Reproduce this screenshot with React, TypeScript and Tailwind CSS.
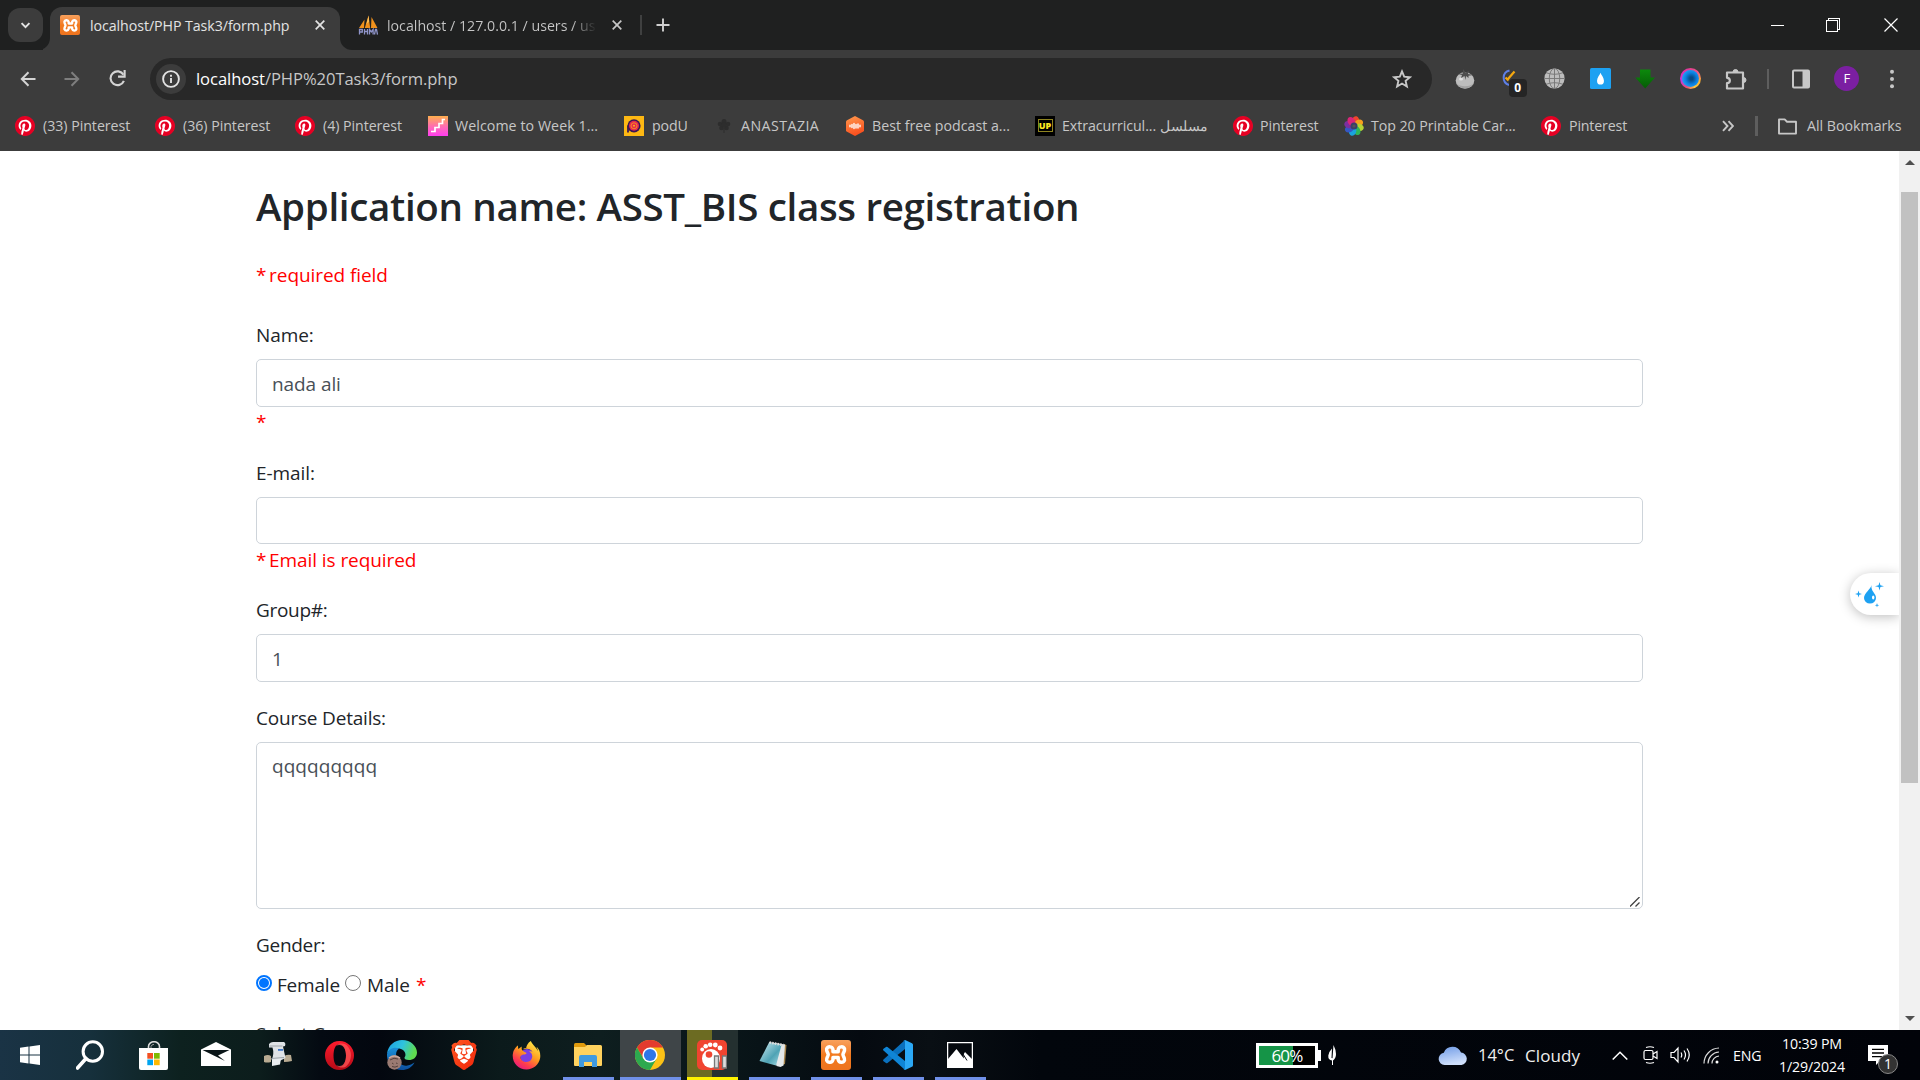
import React from "react";
import { FaFirefoxBrowser } from "react-icons/fa";
import { SiBrave } from "react-icons/si";

const PinIcon = () => (
  <svg viewBox="0 0 24 24" className="h-5 w-5 shrink-0">
    <circle cx="12" cy="12" r="11.2" fill="#fff" />
    <path
      fill="#e60023"
      d="M12 0C5.373 0 0 5.373 0 12c0 5.084 3.163 9.426 7.627 11.174-.105-.949-.2-2.405.042-3.441.218-.937 1.407-5.965 1.407-5.965s-.359-.719-.359-1.782c0-1.668.967-2.914 2.171-2.914 1.023 0 1.518.769 1.518 1.69 0 1.029-.655 2.568-.994 3.995-.283 1.194.599 2.169 1.777 2.169 2.133 0 3.772-2.249 3.772-5.495 0-2.873-2.064-4.882-5.012-4.882-3.414 0-5.418 2.561-5.418 5.207 0 1.031.397 2.138.893 2.738.098.119.112.224.083.345l-.333 1.36c-.053.22-.174.267-.402.161-1.499-.698-2.436-2.889-2.436-4.649 0-3.785 2.75-7.262 7.929-7.262 4.163 0 7.398 2.967 7.398 6.931 0 4.136-2.607 7.464-6.227 7.464-1.216 0-2.359-.631-2.75-1.378l-.748 2.853c-.271 1.043-1.002 2.35-1.492 3.146C9.57 23.812 10.763 24 12 24c6.627 0 12-5.373 12-12S18.627 0 12 0z"
    />
  </svg>
);

const StairsIcon = () => (
  <svg viewBox="0 0 20 20" className="h-5 w-5 shrink-0">
    <defs>
      <linearGradient id="stairs" x1="0" y1="0" x2="0" y2="1">
        <stop offset="0" stopColor="#ffb04d" />
        <stop offset="0.5" stopColor="#ff6fae" />
        <stop offset="1" stopColor="#ff3df0" />
      </linearGradient>
    </defs>
    <rect width="20" height="20" fill="url(#stairs)" />
    <path d="M3 15.500h4v-4h4v-4h3.500v-4h2.500" fill="none" stroke="#fff" strokeWidth="1.700" />
  </svg>
);

const PoduIcon = () => (
  <svg viewBox="0 0 20 20" className="h-5 w-5 shrink-0">
    <rect width="20" height="20" fill="#fdb813" />
    <path d="M4 16.500V9.500" stroke="#3b1653" strokeWidth="1.800" />
    <circle cx="10" cy="9.800" r="6.600" fill="#3b1653" />
    <circle cx="10" cy="9.800" r="5" fill="#e6274e" />
    <circle cx="10" cy="9.800" r="3" fill="none" stroke="#f7941d" strokeWidth="0.900" />
    <circle cx="10" cy="9.800" r="1" fill="#fdb813" />
  </svg>
);

const FlowerIcon = () => (
  <svg viewBox="0 0 20 20" className="h-5 w-5 shrink-0" fill="#2d2d2d">
    <circle cx="10" cy="5.500" r="2.500" />
    <circle cx="6" cy="8" r="2.300" />
    <circle cx="14" cy="8" r="2.300" />
    <circle cx="7.500" cy="12" r="2.300" />
    <circle cx="12.500" cy="12" r="2.300" />
    <circle cx="10" cy="9" r="2.500" />
    <path d="M9.500 12h1v5h-1z" />
  </svg>
);

const PodcastIcon = () => (
  <svg viewBox="0 0 20 20" className="h-5 w-5 shrink-0">
    <defs>
      <linearGradient id="pod" x1="0" y1="0" x2="0.300" y2="1">
        <stop offset="0" stopColor="#ff9a4d" />
        <stop offset="1" stopColor="#f9501f" />
      </linearGradient>
    </defs>
    <path d="M10 0l8 4.200q1 .6 1 1.600v8.400q0 1-1 1.600L10 20l-8-4.200q-1-.6-1-1.600V5.800q0-1 1-1.600z" fill="url(#pod)" />
    <path d="M5 9.300v1.400M7 8.500v3M9 7.500v5M11 8.500v3.500M13 8v4M15 9.300v1.400" stroke="#fff" strokeWidth="1.400" strokeLinecap="round" />
  </svg>
);

const UpIcon = () => (
  <span className="flex h-5 w-5 shrink-0 items-center justify-center bg-black">
    <span className="flex h-[13px] w-[15px] items-center justify-center border border-[#8f8420] text-[9px] leading-none font-extrabold text-[#fce821]">
      UP
    </span>
  </span>
);

const petals = ["#f0452c", "#f7a01d", "#b7d334", "#2fb457", "#1aa3dd", "#3557c4", "#7b2fa0", "#d9267a"];
const RainbowIcon = () => (
  <svg viewBox="0 0 20 20" className="h-5 w-5 shrink-0">
    {petals.map((c, i) => (
      <ellipse key={c} cx="10" cy="4.800" rx="3.600" ry="4.800" fill={c} transform={`rotate(${i * 45 + 15} 10 10)`} />
    ))}
    <circle cx="10" cy="10" r="3.500" fill="#3b3f6a" />
    <circle cx="10" cy="10" r="1.600" fill="#555" />
  </svg>
);

const XamppIcon = ({ className }: { className: string }) => (
  <span className={className + " flex shrink-0 items-center justify-center bg-gradient-to-b from-[#f8a15c] via-[#f27a1e] to-[#ee7420]"}>
    <svg viewBox="0 0 24 24" className="h-[84%] w-[84%]" fill="none" stroke="#fff" strokeWidth="3.300" strokeLinejoin="round">
      <path d="M9.500 9.300V7A3.200 3.200 0 0 0 3.500 6.500C3 9 4.800 10 5 12C4.800 14 3 15 3.500 17.500A3.200 3.200 0 0 0 9.500 17V14.700H14.500V17A3.200 3.200 0 0 0 20.500 17.500C21 15 19.200 14 19 12C19.200 10 21 9 20.500 6.500A3.200 3.200 0 0 0 14.500 7V9.300Z" />
    </svg>
  </span>
);

const PmaIcon = () => (
  <svg viewBox="0 0 20 20" className="h-5 w-5 shrink-0">
    <path d="M1 13L6.500 4.500 6 13zM6.800 13L10.500.5l1.700 12.500zM13 13l.5-11 6 11z" fill="#f0911c" />
    <path d="M8.500 9L10.500.5l.6 6z" fill="#ffc35c" />
    <path d="M1.500 19.500v-5h2.800v2.500H1.700M6.500 14v5.500M9.500 14v5.500M6.500 16.500h3M11.500 19.500v-5l1.800 2.500 1.800-2.500v5M16.500 19.500l1-5h1l1 5" fill="none" stroke="#8f94c9" strokeWidth="1.300" />
  </svg>
);

type Mark = { icon: React.ReactNode; label: string; box: string; text: string };
const bookmarks: Mark[] = [
  { icon: <PinIcon />, label: "(33) Pinterest", box: "w-[140px]", text: "tracking-[-0.03px]" },
  { icon: <PinIcon />, label: "(36) Pinterest", box: "w-[140px]", text: "tracking-[-0.03px]" },
  { icon: <PinIcon />, label: "(4) Pinterest", box: "w-[133px]", text: "tracking-[-0.05px]" },
  { icon: <StairsIcon />, label: "Welcome to Week 1...", box: "w-[196px]", text: "ml-[-1px] tracking-[0.08px]" },
  { icon: <PoduIcon />, label: "podU", box: "w-[90px]", text: "tracking-[-0.1px]" },
  { icon: <FlowerIcon />, label: "ANASTAZIA", box: "w-[131px]", text: "ml-[-1px] tracking-[0.45px]" },
  { icon: <PodcastIcon />, label: "Best free podcast a...", box: "w-[190px]", text: "ml-[-1px] tracking-[0px]" },
  { icon: <UpIcon />, label: "Extracurricul... مسلسل", box: "w-[198px]", text: "ml-[-1px] tracking-[-0.05px]" },
  { icon: <PinIcon />, label: "Pinterest", box: "w-[111px]", text: "ml-[-1px] tracking-[-0.1px]" },
  { icon: <RainbowIcon />, label: "Top 20 Printable Car...", box: "w-[197px]", text: "ml-[-1px] tracking-[-0.05px]" },
  { icon: <PinIcon />, label: "Pinterest", box: "w-[111px]", text: "tracking-[-0.15px]" },
];

const CloseX = ({ color }: { color: string }) => (
  <svg viewBox="0 0 10 10" className="h-[10px] w-[10px] shrink-0" stroke={color} strokeWidth="1.700" fill="none">
    <path d="M.7.7l8.600 8.600M9.300.7L.7 9.300" />
  </svg>
);

const TabStrip = () => (
  <div className="flex h-[50px] bg-[#1f2020]">
    <div className="mt-2 ml-2 flex h-[34px] w-[35px] items-center justify-center rounded-[12px] bg-[#3c3c3c]">
      <svg viewBox="0 0 12 8" className="h-[7px] w-[11px]" fill="none" stroke="#e3e3e3" strokeWidth="2.200">
        <path d="M1.500 1.200L6 5.800l4.500-4.600" />
      </svg>
    </div>
    <div className="flex items-end">
      <div className="flex h-3 w-[7px] justify-end overflow-hidden">
        <div className="h-3 w-3 shrink-0 rounded-br-[12px] shadow-[6px_6px_0_6px_#3c3c3c]" />
      </div>
    </div>
    <div className="mt-[7px] flex h-[43px] w-[290px] items-center rounded-t-[12px] bg-[#3c3c3c] pb-[7px] pl-[10px]">
      <XamppIcon className="h-5 w-5 rounded-[2px]" />
      <span className="mt-px ml-[10px] w-[225px] text-[14.200px] tracking-[-0.06px] whitespace-nowrap text-[#e3e3e3]">localhost/PHP Task3/form.php</span>
      <CloseX color="#e3e3e3" />
    </div>
    <div className="flex w-[18px] items-end overflow-hidden">
      <div className="h-3 w-3 rounded-bl-[12px] shadow-[-6px_6px_0_6px_#3c3c3c]" />
    </div>
    <div className="flex items-center">
      <PmaIcon />
      <span className="mt-px ml-[9px] w-[210px] overflow-hidden bg-gradient-to-r from-[#c7c7c7] from-88% to-[#1f2020] bg-clip-text text-[14.200px] tracking-[0px] whitespace-nowrap text-transparent">
        localhost / 127.0.0.1 / users / us
      </span>
      <span className="ml-[15px] flex">
        <CloseX color="#c7c7c7" />
      </span>
      <span className="ml-[18px] h-5 w-[2px] bg-[#3f4040]" />
      <svg viewBox="0 0 14 14" className="ml-[14px] h-[14px] w-[14px]" stroke="#d0d0d0" strokeWidth="1.900">
        <path d="M7 .5v13M.5 7h13" />
      </svg>
    </div>
    <div className="mr-[22px] ml-auto flex items-center">
      <span className="mr-[42px] h-px w-[13px] bg-white" />
      <svg viewBox="0 0 14 14" className="mr-[44px] h-[14px] w-[14px]" fill="none" stroke="#fff" strokeWidth="1" shapeRendering="crispEdges">
        <path d="M.5 2.500h11v11H.500zM2.500 2.500v-2h11v11h-2" />
      </svg>
      <svg viewBox="0 0 14 14" className="h-[14px] w-[14px]" stroke="#fff" strokeWidth="1.200">
        <path d="M.5.500l13 13M13.500.500l-13 13" />
      </svg>
    </div>
  </div>
);

const Ext = ({ children }: { children: React.ReactNode }) => <span className="flex w-[45.200px] justify-center">{children}</span>;

const Extensions = () => (
  <div className="flex items-center">
    <Ext>
      <svg viewBox="0 0 20 21" className="h-[21px] w-[20px]">
        <ellipse cx="10" cy="12.500" rx="9.300" ry="8.200" fill="#bdbdbd" />
        <path d="M1.500 15a9 8 0 0017 0 9.500 6 0 01-17 0" fill="#a3a3a3" />
        <ellipse cx="6" cy="11" rx="2" ry="1.500" fill="#e0e0e0" />
        <path d="M9.500 8L6 10l1-3-4-1 5-.5L8 1l2.500 3.500L14 3l-1 3 5 1-4.500.7L13.500 10 11 8l-.5 4z" fill="#4e4e4e" />
      </svg>
    </Ext>
    <Ext>
      <span className="relative flex h-[22px] w-[20px]">
        <svg viewBox="0 0 20 20" className="h-5 w-5" fill="none">
          <path d="M9.500 2.500A7.500 7.500 0 009 17" stroke="#5e7fe6" strokeWidth="2" />
          <path d="M14.500 3.500L8 11M5.500 9.500l3 3" stroke="#f5a80f" strokeWidth="2.200" />
        </svg>
        <span className="absolute top-[11px] left-[9px] flex h-[18px] w-[18px] items-center justify-center rounded-[4px] bg-[#252525] text-[12px] leading-none font-bold text-white">0</span>
      </span>
    </Ext>
    <Ext>
      <svg viewBox="0 0 20 20" className="h-[21px] w-[21px]" fill="none">
        <circle cx="10" cy="10" r="9.600" fill="#bdbdbd" />
        <path d="M10 0v20M0.500 10h19M2 4.500q8 3 16 0M2 15.500q8-3 16 0" stroke="#777" strokeWidth="0.900" />
        <ellipse cx="10" cy="10" rx="5" ry="9.600" stroke="#777" strokeWidth="0.900" />
      </svg>
    </Ext>
    <Ext>
      <svg viewBox="0 0 20 20" className="h-[21px] w-[21px]">
        <rect width="20" height="20" rx="1.500" fill="#1da1f2" />
        <path d="M10 4.500c.6 2 3.300 4.500 3.300 7.600a3.300 3.700 0 01-6.600 0C6.700 9 9.400 6.500 10 4.500z" fill="#fff" />
      </svg>
    </Ext>
    <Ext>
      <svg viewBox="0 0 20 20" className="h-[20px] w-[20px]">
        <defs>
          <linearGradient id="dl" x1="0" y1="0" x2="0" y2="1">
            <stop offset="0" stopColor="#0c8a0c" />
            <stop offset="1" stopColor="#065c06" />
          </linearGradient>
        </defs>
        <path d="M5 .5h10.500v8H20L10.200 19.500.300 8.500H5z" fill="url(#dl)" />
      </svg>
    </Ext>
    <Ext>
      <span className="flex h-[21px] w-[21px] items-center justify-center rounded-full bg-[conic-gradient(#e2408f,#f0578a,#ffb02e,#ffc83c,#e84b7a,#c13be0,#e02fb0,#e2408f)]">
        <span className="h-[17px] w-[17px] rounded-full bg-[radial-gradient(circle_at_55%_50%,#084a86_12%,#0a7fe0_45%,#35b0ff_90%)]" />
      </span>
    </Ext>
    <Ext>
      <svg viewBox="0 0 22 22" className="h-[22px] w-[22px]" fill="none" stroke="#c7c7c7" strokeWidth="2.200" strokeLinejoin="round">
        <path d="M2 4.500h16v16H2v-5.300c3.800 0 3.800-5.400 0-5.400z" />
        <path d="M8 4a2.500 2.500 0 015 0zM18.500 9.500a2.500 2.500 0 010 5z" fill="#c7c7c7" strokeWidth="1" />
      </svg>
    </Ext>
  </div>
);

const Toolbar = () => (
  <div className="flex h-[53px] items-center bg-[#3c3c3c] pt-1">
    <div className="flex w-[150px] items-center pl-[20px]">
      <svg viewBox="0 0 16 16" className="h-4 w-4" fill="none" stroke="#d4d4d4" strokeWidth="2">
        <path d="M15.500 8H2M8.500 1.300L1.800 8l6.700 6.700" />
      </svg>
      <svg viewBox="0 0 16 16" className="ml-[28px] h-4 w-4" fill="none" stroke="#7e7e7e" strokeWidth="2">
        <path d="M.5 8H14M7.500 1.300L14.200 8l-6.700 6.700" />
      </svg>
      <svg viewBox="0 0 16 16" className="ml-[29px] h-[17px] w-[17px]" fill="none" stroke="#d4d4d4" strokeWidth="2">
        <path d="M14 10.200A6.500 6.500 0 1113.600 4.500" />
        <path d="M14.700 0v6.200H8.500" />
      </svg>
    </div>
    <div className="flex h-[42px] w-[1282px] items-center rounded-full bg-[#282828] pl-[6px]">
      <span className="flex h-[30px] w-[30px] items-center justify-center rounded-full bg-[#3c3c3c]">
        <svg viewBox="0 0 18 18" className="h-[18px] w-[18px]" fill="none" stroke="#e3e3e3" strokeWidth="1.900">
          <circle cx="9" cy="9" r="7.900" />
          <path d="M9 8v5M9 4.800v2" />
        </svg>
      </span>
      <span className="mt-[2px] ml-[10px] text-[16.600px] tracking-[-0.07px] text-[#c7c7c7]">
        <span className="text-white">localhost</span>/PHP%20Task3/form.php
      </span>
      <svg viewBox="0 0 20 20" className="mr-[20px] ml-auto h-[20px] w-[20px]" fill="none" stroke="#c7c7c7" strokeWidth="1.900">
        <path d="M10 2.400l2.200 5.300 5.700.5-4.300 3.700 1.300 5.600-4.900-3-4.900 3 1.300-5.600-4.300-3.700 5.700-.5z" />
      </svg>
    </div>
    <div className="ml-[10px] flex items-center">
      <Extensions />
      <span className="ml-[9px] h-5 w-[2px] bg-[#5e5e5e]" />
      <svg viewBox="0 0 18 20" className="ml-[23px] h-[20px] w-[18px]">
        <rect x="1" y="1.500" width="16" height="17" rx="1" fill="none" stroke="#c7c7c7" strokeWidth="2" />
        <path d="M10.500 1.500H17v17h-6.500z" fill="#c7c7c7" />
      </svg>
      <span className="ml-[24px] flex h-[25px] w-[25px] items-center justify-center rounded-full bg-[#7b1fa2] text-[13px] text-white">F</span>
      <svg viewBox="0 0 4 20" className="ml-[31px] h-5 w-1" fill="#c7c7c7">
        <circle cx="2" cy="2.800" r="2" />
        <circle cx="2" cy="10" r="2" />
        <circle cx="2" cy="17.200" r="2" />
      </svg>
    </div>
  </div>
);

const BookmarkBar = () => (
  <div className="flex h-[48px] items-center bg-[#3c3c3c] pb-[2px] pl-[15px] text-[14.200px] whitespace-nowrap text-[#c7c7c7]">
    {bookmarks.map((b, i) => (
      <div key={i} className={b.box + " flex shrink-0 items-center gap-[8px]"}>
        {b.icon}
        <span className={b.text}>{b.label}</span>
      </div>
    ))}
    <svg viewBox="0 0 12 12" className="ml-[70px] h-3 w-3 shrink-0" fill="none" stroke="#c7c7c7" strokeWidth="1.900">
      <path d="M1 1.200L5.500 6 1 10.800M6.500 1.200L11 6l-4.500 4.800" />
    </svg>
    <span className="ml-[21px] h-5 w-[3px] shrink-0 bg-[#5e5e5e]" />
    <svg viewBox="0 0 21 18" className="ml-[19px] h-[17px] w-[21px] shrink-0" fill="none" stroke="#c7c7c7" strokeWidth="2">
      <path d="M1.500 1.500h6l2.500 2.500h9.500v12.500h-18z" strokeLinejoin="round" />
    </svg>
    <span className="ml-[9px]">All Bookmarks</span>
  </div>
);

const field = "block w-full rounded-[5px] border border-[#ced4da] pl-[15px] text-[#495057]";

const Star = () => <span className="tracking-[-2.200px] text-[#ff0000]">*</span>;

const FormPage = () => (
  <main className="flex h-[879px] overflow-hidden bg-white">
    <div className="relative flex-1 overflow-hidden pt-[31px] pl-[256px] text-[19px] leading-[30px] tracking-[-0.08px] text-[#212529]">
      <div className="w-[1387px]">
        <h2 className="text-[38.500px] leading-[48px] font-semibold tracking-[-0.330px] whitespace-nowrap">Application name: ASST_BIS class registration</h2>
        <p className="mt-[30px] text-[#ff0000]">
          <Star /> required field
        </p>
        <div className="mt-[30px]">Name:</div>
        <div className={field + " mt-[9px] flex h-[48px] items-center pt-[2px]"}>nada ali</div>
        <div>
          <Star />
        </div>
        <div className="mt-[21px]">E-mail:</div>
        <div className={field + " mt-[9px] h-[47px]"} />
        <div className="mt-px text-[#ff0000]">
          <Star /> Email is required
        </div>
        <div className="mt-[20px] tracking-[-0.300px]">Group#:</div>
        <div className={field + " mt-[9px] flex h-[48px] items-center pt-[2px]"}>1</div>
        <div className="mt-[21px] tracking-[-0.200px]">Course Details:</div>
        <div className={field + " relative mt-[9px] h-[167px] pt-[8px] tracking-[0.060px]"}>
          qqqqqqqqq
          <svg viewBox="0 0 10 10" className="absolute right-[2px] bottom-[1px] h-[10px] w-[10px]" stroke="#444" strokeWidth="1.300">
            <path d="M0 9.500L9.500 0M5.500 9.500l4-4" />
          </svg>
        </div>
        <div className="mt-[21px] tracking-[-0.300px]">Gender:</div>
        <div className="mt-[10px] flex whitespace-pre">
          <span className="mt-[5px] flex h-[16px] w-[16px] items-center justify-center rounded-full border-2 border-[#0075ff]">
            <span className="h-[10px] w-[10px] rounded-full bg-[#0075ff]" />
          </span>
          <span className="ml-[5px] w-[68px] tracking-[-0.200px]">Female</span>
          <span className="mt-[5px] h-[16px] w-[16px] rounded-full border border-[#767676]" />
          <span className="ml-[6px] w-[49px]">Male</span>
          <Star />
        </div>
        <div className="mt-[19px]">Select Courses:</div>
      </div>
      <div className="absolute top-[422px] right-0 h-[42px] w-[49px] rounded-l-full bg-white shadow-[0_2px_12px_rgba(0,0,0,0.25)]">
        <svg viewBox="0 0 30 28" className="mt-[8px] ml-[5px] h-[28px] w-[30px]" fill="#1da1f2">
          <path d="M16.500 4c-.5 4-7.500 8-7.500 13a6 5.500 0 0012 0C21 12 15.500 10.500 16.500 4z" />
          <ellipse cx="18.200" cy="16.500" rx="1.200" ry="2" fill="#fff" />
          <path d="M24.500 1l.9 3.300 3.600.9-3.600.9-.9 3.400-.9-3.400-3.600-.9 3.600-.9zM3.500 9.500l.8 2.700 2.700.8-2.700.8-.8 2.700-.8-2.700L0 13l2.700-.8zM22 22l.5 1.700 1.700.5-1.700.5-.5 1.700-.5-1.700-1.700-.5 1.700-.5z" />
        </svg>
      </div>
    </div>
    <div className="flex w-[21px] flex-col items-center bg-[#f1f1f1]">
      <svg viewBox="0 0 10 5" className="mt-[9px] h-[5px] w-[10px]" fill="#505050">
        <path d="M0 5l5-5 5 5z" />
      </svg>
      <div className="mt-[27px] h-[591px] w-[17px] bg-[#c1c1c1]" />
      <svg viewBox="0 0 10 5" className="mt-auto mb-[9px] h-[5px] w-[10px]" fill="#505050">
        <path d="M0 0l5 5 5-5z" />
      </svg>
    </div>
  </main>
);

const WindowsIcon = () => (
  <svg viewBox="0 0 20 20" className="h-5 w-5" fill="#fff">
    <path d="M0 2.800l8.500-1.200v8H0zM9.500 1.500L20 0v9.600H9.500zM0 10.500h8.500v8L0 17.300zM9.500 10.500H20V20L9.500 18.600z" />
  </svg>
);
const SearchGlass = () => (
  <svg viewBox="0 0 28 30" className="h-[30px] w-[28px]" fill="none" stroke="#fff" strokeWidth="3">
    <circle cx="16.800" cy="11.500" r="9.700" />
    <path d="M10 18.500L1.500 28" strokeWidth="3.600" strokeLinecap="round" />
  </svg>
);
const StoreIcon = () => (
  <svg viewBox="0 0 29 29" className="mr-px h-[29px] w-[29px]">
    <path d="M9.500 8V5.500a5.500 4.800 0 0111 0V8" fill="none" stroke="#ddd" strokeWidth="1.600" />
    <path d="M12 8V5.500q.5-2 3-2.200" fill="none" stroke="#999" strokeWidth="1" />
    <path d="M0 7h29v20a2 2 0 01-2 2H2a2 2 0 01-2-2z" fill="#fff" />
    <path d="M8.300 12h5.700v5.700H8.300z" fill="#f25022" />
    <path d="M15 12h5.700v5.700H15z" fill="#7fba00" />
    <path d="M8.300 18.500h5.700v5.700H8.300z" fill="#00a4ef" />
    <path d="M15 18.500h5.700v5.700H15z" fill="#ffb900" />
  </svg>
);
const MailIcon = () => (
  <svg viewBox="0 0 30 24" className="mt-[-2px] h-6 w-[30px]">
    <path d="M0 7.500L15 0l15 7.500V24H0z" fill="#fff" />
    <path d="M1.500 8h27L17 13.500l7 5.500L1.500 8z" fill="#0a1518" />
  </svg>
);
const ScrollIcon = () => (
  <svg viewBox="0 0 28 26" className="mt-[-2px] h-[26px] w-[28px]">
    <path d="M0 15q4-2 7 0v6q-4 1-7 0zM20 15q4-2 7-1l1 6q-4 1-8 1z" fill="#b9ab92" />
    <path d="M5 3q2-2.500 5-2h10q2 1 1 4l-2 .5 2.500 11.500-6 3-8-1q3-6 1-12.500H5z" fill="#dfe3e6" />
    <path d="M14 8h5v1.800h-5z" fill="#3f78c9" />
    <path d="M8 19l9-1.500-1 6-8 1.500z" fill="#e9edf0" />
    <path d="M7 17.500l13-1M5.500 5h13" stroke="#8d959b" strokeWidth="0.800" />
  </svg>
);
const OperaIcon = () => (
  <svg viewBox="0 0 29 29" className="mr-px h-[29px] w-[29px]">
    <defs>
      <linearGradient id="op" x1="0" y1="0" x2="0" y2="1">
        <stop offset="0" stopColor="#ff1b2d" />
        <stop offset="1" stopColor="#b50b17" />
      </linearGradient>
    </defs>
    <path fillRule="evenodd" d="M14.500 0a14.500 14.500 0 100 29 14.500 14.500 0 000-29zm0 3.200c4 0 6.500 5 6.500 11.300s-2.500 11.300-6.500 11.300S8.500 21 8.500 14.500s2-11.300 6-11.300z" fill="url(#op)" />
    <path d="M11 5c4-4 9-2 10.500-1a14.500 14.500 0 010 21c-2 2-7 2.500-10.500-1 6 3.500 10-2 10-9.500S17 2 11 5z" fill="#ff5a5a" opacity=".7" />
  </svg>
);
const EdgeIcon = () => (
  <svg viewBox="0 0 30 30" className="h-[30px] w-[30px]">
    <defs>
      <linearGradient id="e1" x1="0" y1="0" x2="1" y2="0.300">
        <stop offset="0" stopColor="#1b9de2" />
        <stop offset="0.550" stopColor="#2fc3df" />
        <stop offset="1" stopColor="#5fdb4f" />
      </linearGradient>
      <linearGradient id="e2" x1="0" y1="0" x2="0" y2="1">
        <stop offset="0" stopColor="#1a8fd8" />
        <stop offset="1" stopColor="#0c4f9e" />
      </linearGradient>
    </defs>
    <path d="M0 14C1 5 8 0 15 0c9 0 15 6.500 15 12.500 0 5-4 7.500-8 7.500-3.500 0-5-1.500-4.500-2.500 1.500-1.500 1.500-5-1.500-7.500C11 6.500 3 8 0 14z" fill="url(#e1)" />
    <path d="M0 14c2-6 8-7.500 12.500-5.500C9 10 8.500 14 9.500 18c1.200 5 6 8.500 11 7.500 3-.6 5.500-2 7-3C25 27.500 20 30 15 30 6 30-.5 23 0 14z" fill="url(#e2)" />
    <circle cx="7.500" cy="22.500" r="7.200" fill="#9a7a72" />
    <path d="M3 20q4-3 8-1M5 23l1.500 1M9 23l1.500.5M5 26.500q3 1.500 6-.5" stroke="#54403c" strokeWidth="1" fill="none" />
    <path d="M2 18q5-4 11 0" stroke="#c9aaa0" strokeWidth="1.500" fill="none" />
  </svg>
);
const Gradients = () => (
  <svg className="absolute h-0 w-0">
    <defs>
      <linearGradient id="brave" x1="0" y1="0" x2="1" y2="1">
        <stop offset="0" stopColor="#ff5722" />
        <stop offset="1" stopColor="#f0260b" />
      </linearGradient>
      <linearGradient id="ffx" x1="0.800" y1="0" x2="0.200" y2="1">
        <stop offset="0" stopColor="#fff04a" />
        <stop offset="0.450" stopColor="#ff9a1f" />
        <stop offset="0.750" stopColor="#ff3b4e" />
        <stop offset="1" stopColor="#e31587" />
      </linearGradient>
    </defs>
  </svg>
);
const BraveIcon = () => (
  <span className="relative flex h-[30px] w-[30px] items-center justify-center">
    <svg viewBox="0 0 24 26" className="absolute h-[24px] w-[18px]">
      <path d="M0 0h24v18l-12 8-12-8z" fill="#fff" />
    </svg>
    <SiBrave className="relative h-[30px] w-[30px]" fill="url(#brave)" />
  </span>
);
const FirefoxIcon = () => (
  <span className="relative flex h-[29px] w-[29px] items-center justify-center">
    <span className="absolute top-[8px] left-[8px] h-[14px] w-[14px] rounded-full bg-[#7a3fe4]" />
    <FaFirefoxBrowser className="relative h-[29px] w-[29px]" fill="url(#ffx)" />
  </span>
);
const ExplorerIcon = () => (
  <svg viewBox="0 0 28 24" className="mt-[-1px] h-6 w-7">
    <path d="M0 1.500Q0 0 1.500 0H10l3 3v3H0z" fill="#e09a0c" />
    <path d="M0 4h11l2-2h13.500q1.500 0 1.500 1.500V22q0 1-1 1H1q-1 0-1-1z" fill="#ffd25e" />
    <path d="M5 24V14q0-2 2-2h14q2 0 2 2v10h-5v-5h-8v5z" fill="#3f9ae0" />
  </svg>
);
const ChromeIcon = () => (
  <svg viewBox="0 0 30 30" className="mr-px h-[30px] w-[30px]">
    <circle cx="15" cy="15" r="15" fill="#fbc116" />
    <path d="M2 7.500A15 15 0 0128 7.500H15L8.500 18.750z" fill="#e33b2e" />
    <path d="M2 7.500A15 15 0 0015 30l6.500-11.250L8.500 18.750z" fill="#2da94f" />
    <circle cx="15" cy="15" r="7.600" fill="#fff" />
    <circle cx="15" cy="15" r="6.100" fill="#2f76e8" />
  </svg>
);
const GomIcon = () => (
  <svg viewBox="0 0 30 30" className="mr-px h-[30px] w-[30px]">
    <rect width="30" height="30" rx="5" fill="#f04430" />
    <g fill="#fff">
      <ellipse cx="14" cy="18.500" rx="9" ry="9.500" />
      <circle cx="5.200" cy="9.500" r="1.900" />
      <circle cx="8.700" cy="6.300" r="2.300" />
      <circle cx="13.200" cy="4.700" r="2.300" />
      <circle cx="18.300" cy="5" r="2.400" />
      <circle cx="23" cy="8" r="2.400" />
    </g>
    <circle cx="12" cy="14.500" r="3.300" fill="#f04430" />
    <path d="M17.500 16h4v12h-4zM25.500 16h4v12h-4z" fill="#ddd" stroke="#777" strokeWidth="1.300" />
  </svg>
);
const NotepadIcon = () => (
  <svg viewBox="0 0 28 28" className="mt-[-2px] mr-[3px] h-7 w-7">
    <defs>
      <linearGradient id="np" x1="0" y1="0" x2="1" y2="1">
        <stop offset="0" stopColor="#cfeaf0" />
        <stop offset="0.600" stopColor="#4fa3b5" />
        <stop offset="1" stopColor="#a8dbe4" />
      </linearGradient>
    </defs>
    <path d="M25 4l2.500 1L26 24l-3 1z" fill="#a5834b" />
    <path d="M10 2l16 2.500-1.500 21-3 1.500-4-1z" fill="#e4e8ea" />
    <path d="M10 2.500L22.500 5 17 25.500.500 21z" fill="url(#np)" />
    <path d="M10.500 2.500l14 2.500" stroke="#ddd" strokeWidth="2.500" strokeDasharray="1.500 1.200" />
  </svg>
);
const CodeIcon = () => (
  <svg viewBox="0 0 30 30" className="h-[30px] w-[30px]">
    <path d="M22 0v9L4.500 23q-.8.500-1.500 0L.500 21.200q-.9-.9 0-1.700z" fill="#0a70bd" />
    <path d="M22 30v-9L4.500 7Q3.700 6.500 3 7L.500 8.800q-.9.900 0 1.700z" fill="#0f85d6" />
    <path d="M22 0l7 3.200q1 .5 1 1.500v20.600q0 1-1 1.500L22 30q-1 .3-1.800-.5 1.800.9 1.800-1V1.500q0-1.900-1.800-1Q21-.3 22 0z" fill="#2ba8f5" />
  </svg>
);
const PhotosIcon = () => (
  <svg viewBox="0 0 26 26" className="h-[26px] w-[26px]">
    <rect x="0.600" y="0.600" width="24.800" height="24.800" fill="#05090e" stroke="#fff" strokeWidth="1.300" />
    <path d="M1 17l8.500-10 5 6.500 2.500 3-.5-4 1.500-2.500L25 17v8H1z" fill="#fff" />
    <path d="M16 12l4 6.500" stroke="#05090e" strokeWidth="1" />
  </svg>
);

type App = { icon: React.ReactNode; bar?: boolean };
const apps: App[] = [
  { icon: <StoreIcon /> },
  { icon: <MailIcon /> },
  { icon: <ScrollIcon /> },
  { icon: <OperaIcon /> },
  { icon: <EdgeIcon /> },
  { icon: <BraveIcon /> },
  { icon: <FirefoxIcon /> },
  { icon: <ExplorerIcon />, bar: true },
];
const laterApps: App[] = [
  { icon: <NotepadIcon />, bar: true },
  { icon: <XamppIcon className="h-[30px] w-[30px] rounded-[3px]" />, bar: true },
  { icon: <CodeIcon />, bar: true },
  { icon: <PhotosIcon />, bar: true },
];

const TaskItem = ({ app }: { app: App }) => (
  <div className="flex h-[50px] w-[62px] flex-col items-center">
    <div className="flex flex-1 items-center justify-center pt-[3px]">{app.icon}</div>
    <div className={app.bar ? "h-[3px] w-[51px] bg-[#7090e8]" : "h-[3px] w-[51px]"} />
  </div>
);

const Taskbar = () => (
  <div className="flex h-[50px] bg-[linear-gradient(90deg,#1a3345_0px,#16303c_90px,#0d211f_180px,#0c1d1c_260px,#040a12_320px,#03070f_380px,#0b1a1b_500px,#0e1e1f_600px,#081317_760px,#050a10_860px,#090f14_930px,#02060c_1040px,#010309_1920px)] text-white">
    <Gradients />
    <div className="flex w-[60px] items-center justify-center">
      <WindowsIcon />
    </div>
    <div className="flex w-[63px] items-center justify-center pr-[3px]">
      <SearchGlass />
    </div>
    {apps.map((a, i) => (
      <TaskItem key={i} app={a} />
    ))}
    <div className="ml-[1px] flex w-[61px] flex-col items-center bg-[#3f4548]">
      <div className="flex flex-1 items-center pt-[3px]">
        <ChromeIcon />
      </div>
      <div className="h-[3px] w-full bg-[#7090e8]" />
    </div>
    <div className="mr-[5px] ml-[6px] flex w-[51px] flex-col items-center bg-[linear-gradient(90deg,#6c6b22_25px,#243030_25px)]">
      <div className="flex flex-1 items-center pt-[3px]">
        <GomIcon />
      </div>
      <div className="h-[3px] w-full bg-[#fff200]" />
    </div>
    {laterApps.map((a, i) => (
      <TaskItem key={i} app={a} />
    ))}
    <div className="ml-[265px] flex items-center text-[16.500px]">
      <div className="flex h-[25px] w-[62px] items-center justify-center border-[3px] border-white bg-[linear-gradient(90deg,#159447_34px,#000_34px)] text-[17px] leading-none tracking-[-0.8px]">
        60%
      </div>
      <div className="h-[11px] w-[3px] bg-white" />
      <svg viewBox="0 0 8 20" className="ml-[7px] h-5 w-2" fill="#fff">
        <path d="M5.500 0Q8 5 8 9q0 4-3 6.500V20H4v-4.500Q0 15 .3 10.500 1 6.500 4 3.500L3.500 13l1 .3z" />
      </svg>
      <svg viewBox="0 0 30 20" className="ml-[102px] h-5 w-[30px]">
        <defs>
          <linearGradient id="cl" x1="0" y1="0" x2="0.300" y2="1">
            <stop offset="0" stopColor="#6f9be6" />
            <stop offset="1" stopColor="#cfdffb" />
          </linearGradient>
        </defs>
        <path d="M6.500 20a6.200 6.200 0 01-.7-12.300A9.300 9.300 0 0123 7.500 6.300 6.300 0 0123.500 20z" fill="url(#cl)" />
      </svg>
      <span className="mt-px ml-[10px] w-[47px] text-[#eee]">14°C</span>
      <span className="mt-px w-[87px] text-[17px] tracking-[0.100px] text-[#eee]">Cloudy</span>
      <svg viewBox="0 0 16 9" className="h-[9px] w-4" fill="none" stroke="#fff" strokeWidth="1.500">
        <path d="M.7 8.500L8 1.200l7.300 7.300" />
      </svg>
      <svg viewBox="0 0 16 18" className="ml-[15px] h-[18px] w-4" fill="none" stroke="#fff" strokeWidth="1.200">
        <rect x="1" y="4.500" width="9" height="9" rx="1.500" />
        <path d="M10 8l4-2.500v7L10 10M3 1.500q4-1.500 8 0M3 16.500q4 1.500 8 0" />
      </svg>
      <svg viewBox="0 0 21 18" className="ml-[11px] h-[18px] w-[21px]" fill="none" stroke="#fff" strokeWidth="1.200">
        <path d="M1 6.500h3L8 2v14l-4-4.500H1zM11 6.500q1.500 2.500 0 5M14 4.500q3 4.500 0 9M17 2.500q4.500 6.500 0 13" />
      </svg>
      <svg viewBox="0 0 17 17" className="ml-[12px] h-[17px] w-[17px]" fill="none" stroke="#ddd" strokeWidth="1.200">
        <path d="M1 16.500A15.500 15.500 0 0116 1M5 16.500A11.500 11.500 0 0116 5M9 16.500A7.500 7.500 0 0116 9" />
        <circle cx="14" cy="15" r="1.500" fill="#fff" stroke="none" />
      </svg>
      <span className="mt-px ml-[13px] w-[43px] text-[14.200px] tracking-[-0.100px]">ENG</span>
      <div className="flex w-[72px] flex-col items-center text-[14.200px] leading-[23px] tracking-[-0.150px] whitespace-nowrap">
        <span>10:39 PM</span>
        <span>1/29/2024</span>
      </div>
      <div className="relative ml-[20px] h-[30px] w-[30px]">
        <svg viewBox="0 0 20 20" className="mt-[5px] h-5 w-5">
          <path d="M0 0h20v16h-8l-4 4v-4H0z" fill="#fff" />
          <path d="M4 4.300h12M4 8h12M4 11.700h12" stroke="#000" strokeWidth="1.300" />
        </svg>
        <span className="absolute top-[14px] left-[10px] flex h-5 w-5 items-center justify-center rounded-full border border-[#888] bg-[#333] text-[14px] leading-none">1</span>
      </div>
    </div>
  </div>
);

export default function App() {
  return (
    <div className="h-[1080px] w-[1920px] overflow-hidden font-['Open_Sans','Noto_Sans',sans-serif]">
      <TabStrip />
      <Toolbar />
      <BookmarkBar />
      <FormPage />
      <Taskbar />
    </div>
  );
}
